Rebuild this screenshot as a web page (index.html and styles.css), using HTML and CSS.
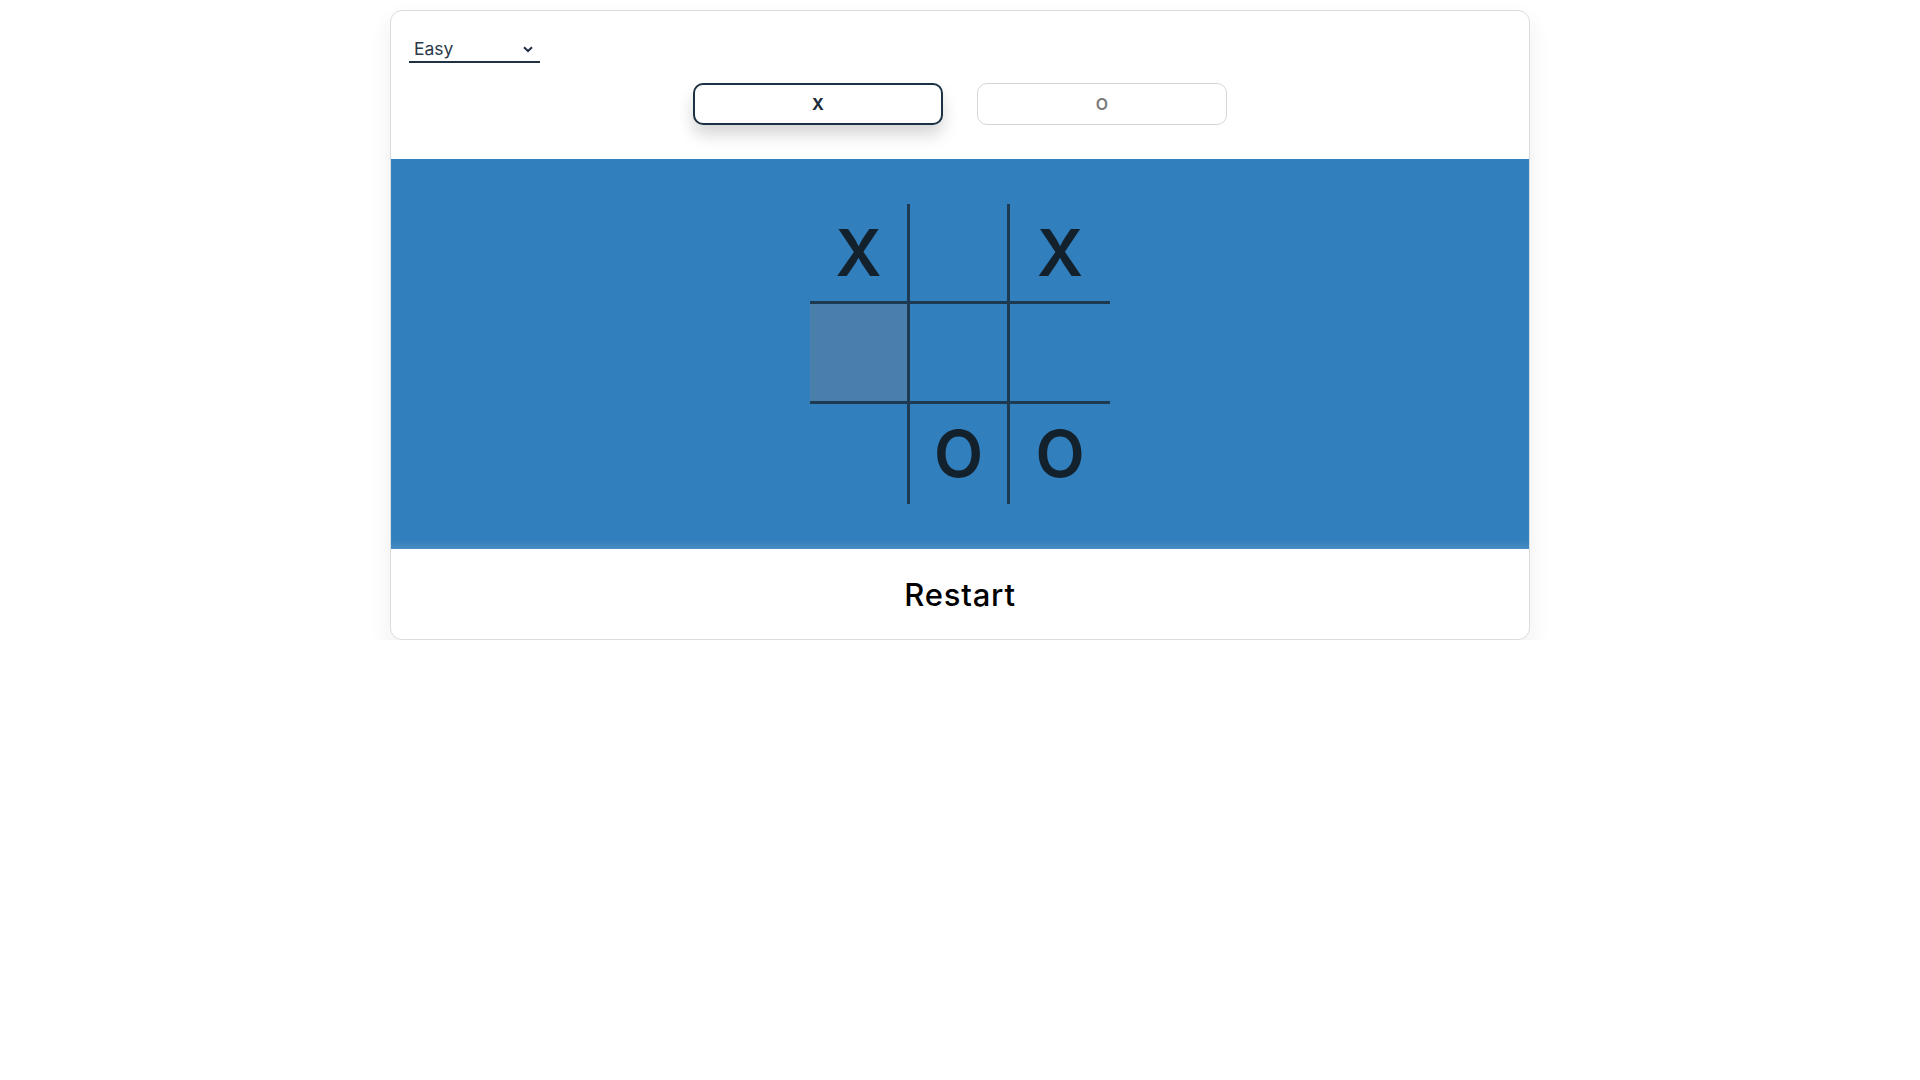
FILE: index.html
```html
<!DOCTYPE html>
<html lang="en">
<head>
<meta charset="utf-8">
<title>Tic Tac Toe</title>
<link rel="stylesheet" href="styles.css">
</head>
<body>
<div class="page">
  <div class="card">
    <div class="header">
      <div class="select">
        <span class="select-label">Easy</span>
        <svg class="chevron" width="10" height="7" viewBox="0 0 10 7"><path d="M1 1.2 L5 5 L9 1.2" fill="none" stroke="#1f3244" stroke-width="2"/></svg>
      </div>
      <div class="players">
        <button class="player active">X</button>
        <button class="player">O</button>
      </div>
    </div>
    <div class="stage">
      <div class="board">
        <div class="cell">X</div>
        <div class="cell"></div>
        <div class="cell">X</div>
        <div class="cell hover"></div>
        <div class="cell"></div>
        <div class="cell"></div>
        <div class="cell"></div>
        <div class="cell">O</div>
        <div class="cell">O</div>
      </div>
    </div>
    <div class="footer">Restart</div>
  </div>
</div>
</body>
</html>
```

FILE: styles.css
```css
html, body {
  margin: 0;
  padding: 0;
  background: #ffffff;
  font-family: "Inter", "Noto Sans", sans-serif;
}

.page {
  padding-top: 10px;
  display: flex;
  justify-content: center;
}

.card {
  width: 1140px;
  box-sizing: border-box;
  border: 1px solid #dcdcdc;
  border-radius: 12px;
  overflow: hidden;
  background: #fff;
  box-shadow: 0 10px 25px rgba(0, 0, 0, 0.07);
}

.header {
  padding: 22px 18px 34px 18px;
}

.select {
  width: 131px;
  height: 30px;
  box-sizing: border-box;
  border-bottom: 2px solid #1f3244;
  display: flex;
  align-items: center;
  justify-content: space-between;
  padding: 3px 7px 0 5px;
  color: #2b3a48;
  font-size: 17.5px;
}

.chevron {
  display: block;
  margin-top: 2px;
}

.players {
  margin-top: 20px;
  display: flex;
  justify-content: center;
  gap: 34px;
}

.player {
  width: 250px;
  height: 42px;
  box-sizing: border-box;
  border: 1px solid #d6d6d6;
  border-radius: 10px;
  background: #fff;
  font-family: "Inter", "Noto Sans", sans-serif;
  font-size: 16px;
  font-weight: 600;
  color: #7a7a7a;
  padding: 0;
}

.player.active {
  border: 2px solid #1c3144;
  color: #1c2b3a;
  font-weight: 700;
  box-shadow: 0 10px 16px rgba(0, 0, 0, 0.16);
}

.stage {
  background: #327fbd;
  height: 390px;
  box-sizing: border-box;
  padding-top: 45px;
  display: flex;
  justify-content: center;
  box-shadow: inset 0 -7px 6px -3px rgba(255, 255, 255, 0.12);
}

.board {
  width: 300px;
  height: 300px;
  display: grid;
  grid-template-columns: repeat(3, 100px);
  grid-template-rows: repeat(3, 100px);
}

.cell {
  box-sizing: border-box;
  display: flex;
  align-items: center;
  justify-content: center;
  font-size: 64px;
  font-weight: 600;
  color: #13212d;
  line-height: 1;
}

.cell:nth-child(3n+1),
.cell:nth-child(3n+2) {
  border-right: 3px solid #1e3a52;
}

.cell:nth-child(-n+6) {
  border-bottom: 3px solid #1e3a52;
}

.cell.hover {
  background: #4a7eab;
}

.footer {
  height: 90px;
  display: flex;
  align-items: center;
  justify-content: center;
  font-size: 31px;
  font-weight: 500;
  color: #000;
  letter-spacing: 0.8px;
}
```
